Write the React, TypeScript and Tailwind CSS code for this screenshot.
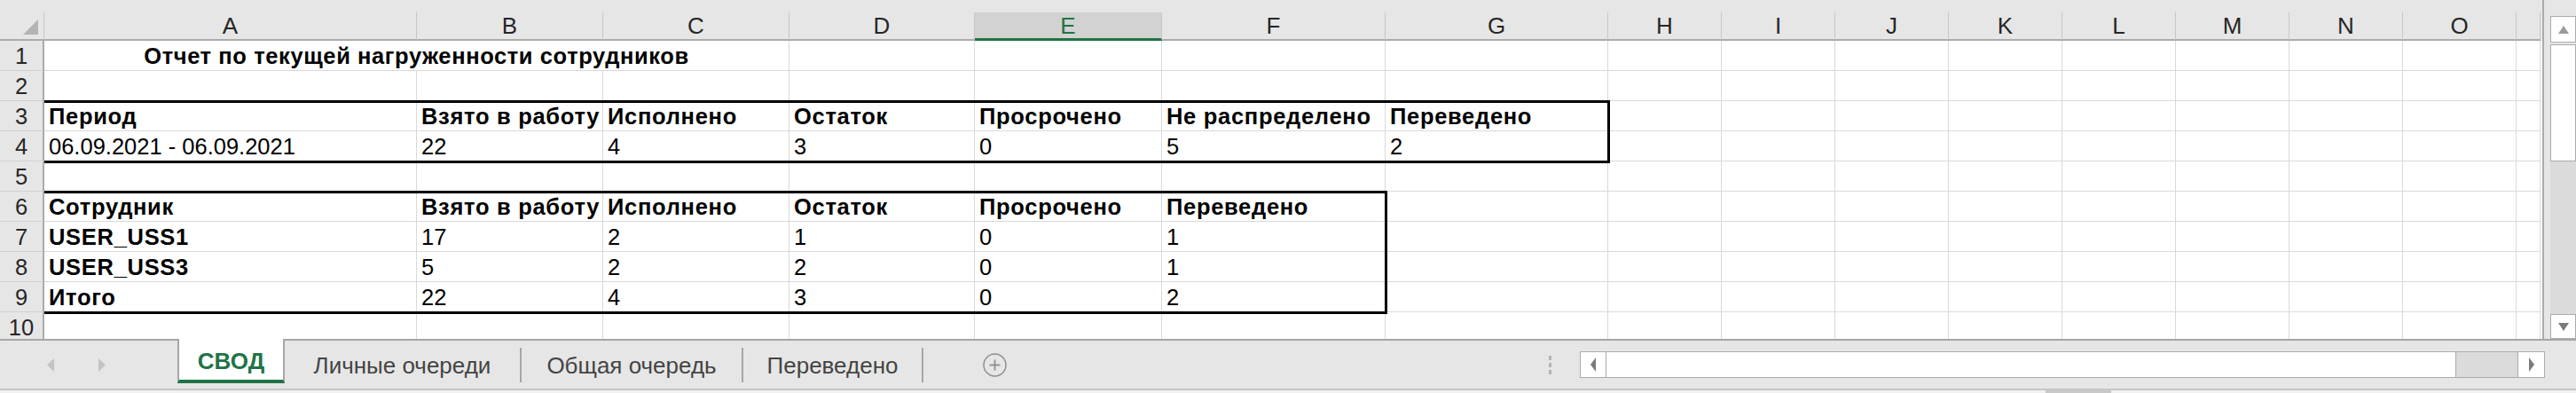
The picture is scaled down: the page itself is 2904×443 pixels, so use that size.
import React from "react";

const GRID =
  "grid grid-cols-[50px_420px_210px_210px_209px_211px_252px_251px_128px_128px_128px_128px_128px_128px_128px_128px_27px]";

type C = { t: string; b?: boolean };

const LETTERS = ["A", "B", "C", "D", "E", "F", "G", "H", "I", "J", "K", "L", "M", "N", "O", ""];

const DATA: Record<number, C[]> = {
  3: [
    { t: "Период", b: true },
    { t: "Взято в работу", b: true },
    { t: "Исполнено", b: true },
    { t: "Остаток", b: true },
    { t: "Просрочено", b: true },
    { t: "Не распределено", b: true },
    { t: "Переведено", b: true },
  ],
  4: [
    { t: "06.09.2021 - 06.09.2021" },
    { t: "22" },
    { t: "4" },
    { t: "3" },
    { t: "0" },
    { t: "5" },
    { t: "2" },
  ],
  6: [
    { t: "Сотрудник", b: true },
    { t: "Взято в работу", b: true },
    { t: "Исполнено", b: true },
    { t: "Остаток", b: true },
    { t: "Просрочено", b: true },
    { t: "Переведено", b: true },
  ],
  7: [{ t: "USER_USS1", b: true }, { t: "17" }, { t: "2" }, { t: "1" }, { t: "0" }, { t: "1" }],
  8: [{ t: "USER_USS3", b: true }, { t: "5" }, { t: "2" }, { t: "2" }, { t: "0" }, { t: "1" }],
  9: [{ t: "Итого", b: true }, { t: "22" }, { t: "4" }, { t: "3" }, { t: "0" }, { t: "2" }],
};

function Cell({ c }: { c?: C }) {
  return (
    <div
      className={
        c && c.b
          ? "h-[34px] border-r border-b border-[#d9d9d9] flex items-end pb-[3px] pl-[5px] overflow-hidden whitespace-nowrap font-bold tracking-[0.7px] text-black"
          : "h-[34px] border-r border-b border-[#d9d9d9] flex items-end pb-[3px] pl-[5px] overflow-hidden whitespace-nowrap text-black"
      }
    >
      {c ? c.t : ""}
    </div>
  );
}

function RowHead({ n }: { n: number }) {
  return (
    <div className="h-[34px] bg-[#e6e6e6] border-r-2 border-r-[#ababab] border-b border-b-[#d0d0d0] flex items-end justify-center pb-[3px] text-[#262626]">
      {n}
    </div>
  );
}

function Row({ n }: { n: number }) {
  const cells: React.ReactNode[] = [];
  if (n === 1) {
    cells.push(
      <div
        key="t"
        className="col-span-3 h-[34px] border-r border-b border-[#d9d9d9] flex items-end justify-center pb-[3px] overflow-hidden whitespace-nowrap font-bold tracking-[0.6px] text-black"
      >
        Отчет по текущей нагруженности сотрудников
      </div>
    );
    for (let i = 3; i < 16; i++) cells.push(<Cell key={i} />);
  } else {
    const d = DATA[n] || [];
    for (let i = 0; i < 16; i++) cells.push(<Cell key={i} c={d[i]} />);
  }
  return (
    <div className={GRID}>
      <RowHead n={n} />
      {cells}
    </div>
  );
}

function Dashes() {
  return (
    <div className="flex flex-col gap-[3px] w-[3px]">
      <div className="h-[5px] bg-[#b4b4b4]" />
      <div className="h-[5px] bg-[#b4b4b4]" />
      <div className="h-[5px] bg-[#b4b4b4]" />
    </div>
  );
}

export default function App() {
  return (
    <div className="w-[2904px] h-[443px] bg-[#e6e6e6] flex flex-col overflow-hidden font-['Liberation_Sans',Arial,sans-serif] text-[25.5px] leading-none">
      {/* main area */}
      <div className="flex h-[382px]">
        {/* sheet */}
        <div className="w-[2868px] flex flex-col border-r-2 border-r-[#ababab]">
          <div className="h-[14px]" />
          {/* column headers */}
          <div className={GRID}>
            <div className="h-[32px] border-r border-r-[#c6c6c6] border-b-2 border-b-[#ababab] relative">
              <svg className="absolute left-[26px] top-[8px]" width="18" height="18" viewBox="0 0 18 18">
                <polygon points="17,0 17,17 0,17" fill="#b4b4b4" />
              </svg>
            </div>
            {LETTERS.map((l, i) =>
              l === "E" ? (
                <div
                  key={i}
                  className="h-[32px] bg-[#d2d2d2] border-r border-r-[#c6c6c6] border-b-[3px] border-b-[#217346] flex items-center justify-center text-[26px] text-[#217346]"
                >
                  {l}
                </div>
              ) : (
                <div
                  key={i}
                  className="h-[32px] border-r border-r-[#c6c6c6] border-b-2 border-b-[#ababab] flex items-center justify-center text-[26px] text-[#262626]"
                >
                  {l}
                </div>
              )
            )}
          </div>
          {/* body */}
          <div className="relative h-[336px] overflow-hidden bg-white">
            {[1, 2, 3, 4, 5, 6, 7, 8, 9, 10].map((n) => (
              <Row key={n} n={n} />
            ))}
            <div className="absolute left-[50px] top-[67px] w-[1765px] h-[71px] border-t-[3px] border-b-[3px] border-r-[3px] border-black pointer-events-none" />
            <div className="absolute left-[50px] top-[169px] w-[1514px] h-[139px] border-t-[3px] border-b-[3px] border-r-[3px] border-black pointer-events-none" />
          </div>
        </div>
        {/* vertical scrollbar */}
        <div className="ml-[7px] w-[29px] mt-[18px] flex flex-col">
          <div className="h-[30px] bg-white border border-[#ababab] flex items-center justify-center">
            <svg width="12" height="9" viewBox="0 0 12 9">
              <polygon points="6,0 12,9 0,9" fill="#9a9a9a" />
            </svg>
          </div>
          <div className="h-[2px]" />
          <div className="h-[132px] bg-white border border-[#ababab]" />
          <div className="flex-1 bg-[#dbdbdb]" />
          <div className="h-[28px] bg-white border border-[#ababab] flex items-center justify-center">
            <svg width="12" height="9" viewBox="0 0 12 9">
              <polygon points="0,0 12,0 6,9" fill="#7a7a7a" />
            </svg>
          </div>
        </div>
      </div>

      {/* tab bar */}
      <div className="h-[56px] flex text-[26px]">
        <div className="w-[200px] border-t-2 border-t-[#a6a6a6] flex items-center pl-[53px] gap-[50px]">
          <svg width="8" height="15" viewBox="0 0 8 15">
            <polygon points="8,0 8,15 0,7.5" fill="#c3c3c3" />
          </svg>
          <svg width="8" height="15" viewBox="0 0 8 15">
            <polygon points="0,0 8,7.5 0,15" fill="#c3c3c3" />
          </svg>
        </div>
        <div className="w-[121px] h-[50px] bg-white border-l-2 border-r-2 border-[#a6a6a6] border-b-4 border-b-[#217346] flex items-center justify-center pt-[3px] font-bold text-[#217346]">
          СВОД
        </div>
        <div className="flex-1 border-t-2 border-t-[#a6a6a6] flex items-center text-[#444444]">
          <div className="w-[265px] flex justify-center pt-[2px]">Личные очереди</div>
          <div className="w-[2px] h-[39px] bg-[#a6a6a6]" />
          <div className="w-[248px] flex justify-center pt-[2px]">Общая очередь</div>
          <div className="w-[2px] h-[39px] bg-[#a6a6a6]" />
          <div className="w-[201px] flex justify-center pt-[2px]">Переведено</div>
          <div className="w-[2px] h-[39px] bg-[#a6a6a6]" />
          <div className="ml-[67px] w-[27px] h-[27px]">
            <svg width="27" height="27" viewBox="0 0 27 27">
              <circle cx="13.5" cy="13.5" r="12.5" fill="none" stroke="#8f8f8f" strokeWidth="1.5" />
              <line x1="13.5" y1="7.5" x2="13.5" y2="19.5" stroke="#8f8f8f" strokeWidth="1.8" />
              <line x1="7.5" y1="13.5" x2="19.5" y2="13.5" stroke="#8f8f8f" strokeWidth="1.8" />
            </svg>
          </div>
          <div className="ml-[611px]">
            <Dashes />
          </div>
          {/* horizontal scrollbar */}
          <div className="ml-[32px] w-[1088px] h-[30px] flex border border-[#ababab] bg-white">
            <div className="w-[29px] border-r border-r-[#ababab] flex items-center justify-center">
              <svg width="6" height="16" viewBox="0 0 6 16">
                <polygon points="6,0 6,16 0,8" fill="#7a7a7a" />
              </svg>
            </div>
            <div className="flex-1 border-r border-r-[#ababab]" />
            <div className="w-[70px] bg-[#dbdbdb] border-r border-r-[#ababab]" />
            <div className="w-[29px] flex items-center justify-center">
              <svg width="6" height="16" viewBox="0 0 6 16">
                <polygon points="0,0 6,8 0,16" fill="#7a7a7a" />
              </svg>
            </div>
          </div>
        </div>
      </div>

      {/* bottom strip */}
      <div className="h-[5px] border-t-2 border-t-[#c6c6c6] bg-[#f0f0f0] flex">
        <div className="ml-[2306px] w-[74px] bg-[#c8c8c8]" />
      </div>
    </div>
  );
}
